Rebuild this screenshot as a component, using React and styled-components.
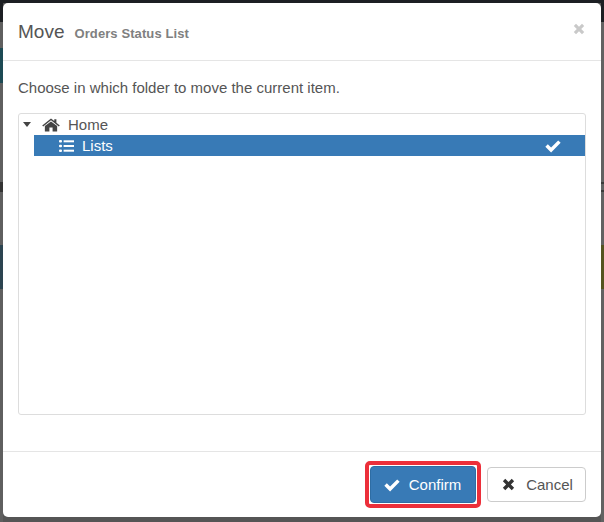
import React from "react";
import styled, { createGlobalStyle } from "styled-components";

const Global = createGlobalStyle`
  html, body { margin: 0; padding: 0; background: #555; }
  body { font-family: "Liberation Sans", Arial, sans-serif; color: #555; }
`;

const leftStrip = `linear-gradient(180deg,
  #1c1f23 0 22px, #5f5f5f 22px 48px, #1d4a54 48px 83px, #5f5f5f 83px 182px,
  #333 182px 192px, #5f5f5f 192px 245px, #2c4450 245px 289px, #5f5f5f 289px 100%)`;
const rightStrip = `linear-gradient(180deg,
  #1c1f23 0 22px, #626262 22px 182px, #3a3a3a 182px 184px, #626262 184px 190px,
  #3a3a3a 190px 192px, #626262 192px 245px, #55531f 245px 289px, #626262 289px 100%)`;

const Backdrop = styled.div`
  box-sizing: border-box;
  width: 604px;
  height: 522px;
  padding: 3px 3px 5px 3px;
  background:
    linear-gradient(#1c1f23 0 3px, transparent 3px),
    ${leftStrip} 0 0 / 3px 100% no-repeat,
    ${rightStrip} 601px 0 / 3px 100% no-repeat,
    #555;
  overflow: hidden;
`;

const Dialog = styled.div`
  box-sizing: border-box;
  height: 514px;
  display: flex;
  flex-direction: column;
  background: #fff;
  border-radius: 5px;
`;

const Header = styled.header`
  box-sizing: border-box;
  height: 58px;
  flex: none;
  display: flex;
  align-items: center;
  padding: 2px 15px 0;
  border-bottom: 1px solid #e5e5e5;
`;

const Title = styled.h4`
  margin: 0;
  font-size: 19px;
  line-height: 20px;
  font-weight: 400;
  color: #555;
  flex: 1;
`;

const Sub = styled.small`
  margin-left: 10px;
  font-size: 13px;
  font-weight: 700;
  color: #808080;
  letter-spacing: 0.1px;
`;

const Close = styled.button`
  border: 0;
  padding: 0;
  background: none;
  display: flex;
  margin: -8px 1px 0 0;
`;

const Body = styled.div`
  flex: 1;
  display: flex;
  flex-direction: column;
  padding: 17px 15px 36px;
  min-height: 0;
`;

const Prompt = styled.p`
  margin: 0 0 15px;
  font-size: 15px;
  line-height: 20px;
  color: #555;
`;

const Tree = styled.div`
  flex: 1;
  box-sizing: border-box;
  border: 1px solid #ddd;
  border-radius: 3px;
`;

const Row = styled.div`
  display: flex;
  align-items: center;
  height: 21px;
  font-size: 15px;
  padding-left: ${(p) => p.$indent}px;
  color: ${(p) => (p.$selected ? "#fff" : "#555")};
`;

const Selected = styled(Row)`
  margin-left: 15px;
  background: #387ab6;
`;

const Caret = styled.span`
  width: 0;
  height: 0;
  border-left: 4.5px solid transparent;
  border-right: 4.5px solid transparent;
  border-top: 5px solid #444;
  margin-right: 11px;
`;

const Label = styled.span`
  margin-left: 8px;
  flex: 1;
`;

const Footer = styled.footer`
  box-sizing: border-box;
  height: 66px;
  flex: none;
  display: flex;
  align-items: center;
  justify-content: flex-end;
  gap: 6px;
  padding: 0 15px 0 0;
  border-top: 1px solid #e5e5e5;
`;

const Highlight = styled.div`
  box-sizing: border-box;
  width: 116px;
  height: 47px;
  border: 4px solid #ec2f3a;
  border-radius: 5px;
  background: #fff;
  padding: 1px;
  display: flex;
`;

const Button = styled.button`
  box-sizing: border-box;
  display: flex;
  align-items: center;
  justify-content: center;
  gap: ${(p) => (p.$primary ? "8px" : "11px")};
  height: ${(p) => (p.$primary ? "100%" : "35px")};
  width: ${(p) => (p.$primary ? "100%" : "99px")};
  font: 15px "Liberation Sans", Arial, sans-serif;
  border-radius: 4px;
  border: 1px solid ${(p) => (p.$primary ? "#2e6da4" : "#ccc")};
  background: ${(p) => (p.$primary ? "#387ab6" : "#fff")};
  color: ${(p) => (p.$primary ? "#fff" : "#555")};
  padding: ${(p) => (p.$primary ? "0 2px 0 0" : "0 0 0 2px")};
`;

const Check = ({ size = 16, color = "#fff" }) => (
  <svg width={size} height={size} viewBox="0 0 16 16" aria-hidden="true">
    <path d="M1.2 8.6 L3.4 6.4 L6.3 9.3 L12.6 3 L14.8 5.2 L6.3 13.7 Z" fill={color} />
  </svg>
);

const Cross = ({ size = 12, color = "#333" }) => (
  <svg width={size} height={size} viewBox="0 0 12 12" aria-hidden="true">
    <path d="M0.8 3 L3 0.8 L6 3.8 L9 0.8 L11.2 3 L8.2 6 L11.2 9 L9 11.2 L6 8.2 L3 11.2 L0.8 9 L3.8 6 Z" fill={color} />
  </svg>
);

const HomeIcon = () => (
  <svg width="18" height="14" viewBox="0 0 17 14" preserveAspectRatio="none" aria-hidden="true">
    <path d="M8.5 0.4 L11.6 3 V1.2 H13.6 V4.7 L16.8 7.4 L15.9 8.4 L8.5 2.3 L1.1 8.4 L0.2 7.4 Z" fill="#444" />
    <path d="M8.5 3.4 L14.3 8.1 V13.4 H10 V9.6 H7 V13.4 H2.7 V8.1 Z" fill="#444" />
  </svg>
);

const ListIcon = () => (
  <svg width="15" height="12" viewBox="0 0 15 12" aria-hidden="true" fill="#fff">
    <rect x="0" y="0" width="3" height="2.6" rx="1" />
    <rect x="0" y="4.7" width="3" height="2.6" rx="1" />
    <rect x="0" y="9.4" width="3" height="2.6" rx="1" />
    <rect x="4.6" y="0.3" width="10.4" height="2" />
    <rect x="4.6" y="5" width="10.4" height="2" />
    <rect x="4.6" y="9.7" width="10.4" height="2" />
  </svg>
);

const RowCheck = styled.span`
  display: flex;
  margin-right: 23px;
`;

export default function App() {
  return (
    <>
      <Global />
      <Backdrop>
        <Dialog>
          <Header>
            <Title>
              Move<Sub>Orders Status List</Sub>
            </Title>
            <Close aria-label="Close">
              <Cross size={12} color="#c9c9c9" />
            </Close>
          </Header>
          <Body>
            <Prompt>Choose in which folder to move the current item.</Prompt>
            <Tree>
              <Row $indent={4}>
                <Caret />
                <HomeIcon />
                <Label>Home</Label>
              </Row>
              <Selected $selected $indent={25}>
                <ListIcon />
                <Label>Lists</Label>
                <RowCheck>
                  <Check size={18} />
                </RowCheck>
              </Selected>
            </Tree>
          </Body>
          <Footer>
            <Highlight>
              <Button $primary>
                <Check size={18} />
                Confirm
              </Button>
            </Highlight>
            <Button>
              <Cross size={13} />
              Cancel
            </Button>
          </Footer>
        </Dialog>
      </Backdrop>
    </>
  );
}
